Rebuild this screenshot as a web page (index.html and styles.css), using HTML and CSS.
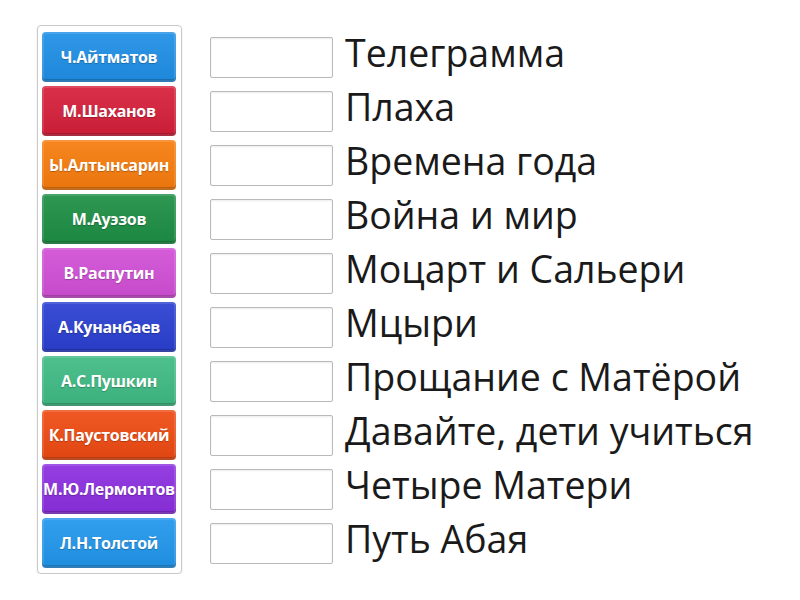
FILE: index.html
```html
<!DOCTYPE html>
<html lang="ru">
<head>
<meta charset="utf-8">
<link rel="stylesheet" href="styles.css">
</head>
<body>
<div class="page">
  <div class="bank">
    <div class="tile c1">Ч.Айтматов</div>
    <div class="tile c2">М.Шаханов</div>
    <div class="tile c3">Ы.Алтынсарин</div>
    <div class="tile c4">М.Ауэзов</div>
    <div class="tile c5">В.Распутин</div>
    <div class="tile c6">А.Кунанбаев</div>
    <div class="tile c7">А.С.Пушкин</div>
    <div class="tile c8">К.Паустовский</div>
    <div class="tile c9">М.Ю.Лермонтов</div>
    <div class="tile c10">Л.Н.Толстой</div>
  </div>
  <div class="rows">
    <div class="row"><div class="slot"></div><div class="label">Телеграмма</div></div>
    <div class="row"><div class="slot"></div><div class="label">Плаха</div></div>
    <div class="row"><div class="slot"></div><div class="label">Времена года</div></div>
    <div class="row"><div class="slot"></div><div class="label">Война и мир</div></div>
    <div class="row"><div class="slot"></div><div class="label">Моцарт и Сальери</div></div>
    <div class="row"><div class="slot"></div><div class="label">Мцыри</div></div>
    <div class="row"><div class="slot"></div><div class="label">Прощание с Матёрой</div></div>
    <div class="row"><div class="slot"></div><div class="label">Давайте, дети учиться</div></div>
    <div class="row"><div class="slot"></div><div class="label">Четыре Матери</div></div>
    <div class="row"><div class="slot"></div><div class="label">Путь Абая</div></div>
  </div>
</div>
</body>
</html>
```

FILE: styles.css
```css
html, body {
  margin: 0;
  padding: 0;
  background: #ffffff;
}
.page {
  display: flex;
  align-items: flex-start;
  padding: 25px 0 0 37px;
  gap: 28px;
  font-family: "Open Sans", "Noto Sans", sans-serif;
}
.bank {
  display: flex;
  flex-direction: column;
  gap: 4px;
  padding: 6px 5px 5px 4px;
  border: 1px solid #c9c9c9;
  border-radius: 4px;
  box-shadow: 0 1px 2px rgba(0,0,0,0.12);
  width: 134px;
}
.tile {
  height: 50px;
  box-sizing: border-box;
  border-radius: 4px;
  display: flex;
  align-items: center;
  justify-content: center;
  color: #ffffff;
  font-weight: 700;
  font-size: 16px;
  letter-spacing: -0.3px;
  white-space: nowrap;
  overflow: hidden;
  text-shadow: 0 1px 1px rgba(0,0,0,0.25);
  box-shadow: inset 0 -3px 0 rgba(0,0,0,0.18), inset 0 0 0 2px rgba(255,255,255,0.12);
  background-image: linear-gradient(to bottom, rgba(255,255,255,0.08), rgba(0,0,0,0.06));
}
.c1 { background-color: #1f8fe6; }
.c2 { background-color: #d61f3a; }
.c3 { background-color: #f77c0d; }
.c4 { background-color: #1d8f44; }
.c5 { background-color: #d14fd6; }
.c6 { background-color: #2a3fd1; }
.c7 { background-color: #3fbb84; }
.c8 { background-color: #ee4a12; }
.c9 { background-color: #8c2fe0; }
.c10 { background-color: #2196ec; }
.rows {
  display: flex;
  flex-direction: column;
  gap: 4px;
  padding-top: 7px;
}
.row {
  height: 50px;
  display: flex;
  align-items: center;
  gap: 12px;
}
.slot {
  width: 121px;
  height: 39px;
  border: 1px solid #b9b9b9;
  border-radius: 2px;
  box-shadow: inset 0 1px 2px rgba(0,0,0,0.08);
  flex: none;
}
.label {
  font-size: 37.5px;
  line-height: 50px;
  margin-bottom: 8px;
  color: #1a1a1a;
  white-space: nowrap;
}
```
